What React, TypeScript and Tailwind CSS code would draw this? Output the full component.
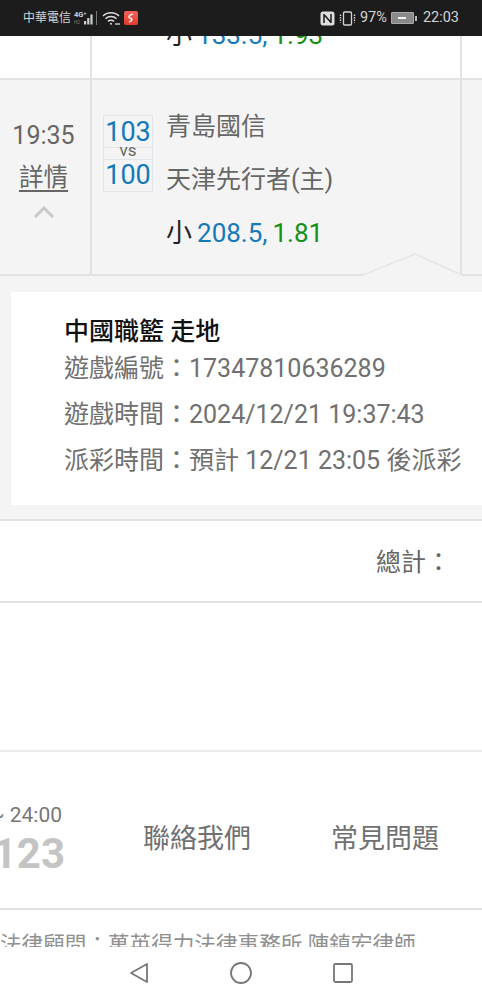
const font = "font-['Roboto','Noto_Sans_CJK_TC',sans-serif]";

function StatusBar() {
  return (
    <div className="h-9 shrink-0 bg-[#1c1c1c] flex items-center pl-[23px] pr-[23px] text-[#d4d4d4] justify-between">
      <div className="flex items-center">
        <span className="text-[12px] leading-none">中華電信</span>
        <svg width="26" height="16" viewBox="0 0 26 16" className="ml-[2px]" fill="#cfcfcf">
          <text x="1" y="7" fontSize="7.5" fontWeight="700">4G⁺</text>
          <text x="1" y="14" fontSize="4.5" fill="#777">HD</text>
          <rect x="11" y="11" width="2.2" height="3.5" />
          <rect x="14.2" y="8" width="2.2" height="6.5" />
          <rect x="17.4" y="4.5" width="2.2" height="10" />
          <rect x="23" y="1" width="1" height="14" fill="#777" />
        </svg>
        <svg width="19" height="15" viewBox="0 0 19 15" className="ml-[3px]" fill="none" stroke="#dcdcdc" strokeWidth="1.5">
          <path d="M1 5 C5 0.5 13 0.5 17 5" />
          <path d="M3.5 7.8 C6.5 4.8 11.5 4.8 14.5 7.8" />
          <path d="M6 10.4 C7.5 9 10.5 9 12 10.4" />
          <circle cx="9" cy="12.8" r="1" fill="#dcdcdc" stroke="none" />
          <rect x="13" y="12" width="5" height="2" fill="#999" stroke="none" />
        </svg>
        <div className="ml-[3px] w-[14px] h-[14px] rounded-[2px] bg-gradient-to-b from-[#f4605a] to-[#e23a2c] flex items-center justify-center">
          <svg width="8" height="10" viewBox="0 0 8 10" fill="none" stroke="#fbe3df" strokeWidth="1.8">
            <path d="M6 1 C2 2 1 4 3 5 C6 6 5 8 2 9" />
          </svg>
        </div>
      </div>
      <div className="flex items-center">
        <svg width="15" height="15" viewBox="0 0 15 15">
          <rect x="0.5" y="0.5" width="14" height="14" rx="2.5" fill="#dedede" />
          <path d="M4 3 V12 M4 3.5 L11 11.5 M11 3 V12" stroke="#1c1c1c" strokeWidth="1.5" fill="none" />
        </svg>
        <svg width="19" height="15" viewBox="0 0 19 15" className="ml-[3px]" fill="none" stroke="#d4d4d4">
          <rect x="5.5" y="1" width="8" height="13" rx="1" strokeWidth="1.3" />
          <path d="M2.5 3.5 V11.5 M16.5 3.5 V11.5" strokeWidth="1.4" strokeDasharray="1.5 1" />
        </svg>
        <span className="ml-[3px] text-[14.5px] leading-none">97%</span>
        <div className="ml-1 flex items-center">
          <div className="w-[23px] h-[12px] bg-[#8a8a8a] border border-[#aaa] rounded-[1px] flex items-center justify-center">
            <div className="w-2 h-[2px] bg-[#f2f2f2]" />
          </div>
          <div className="w-[2px] h-[5px] bg-[#bbb] ml-[1px]" />
        </div>
        <span className="ml-[6px] text-[14.5px] leading-none">22:03</span>
      </div>
    </div>
  );
}

function Odds({ line, price }: { line: string; price: string }) {
  return (
    <div className="text-[26px] leading-none whitespace-nowrap">
      <span className="text-[#222]">小</span>
      <span className="ml-[5px] text-[#1479b8]">{line},</span>
      <span className="ml-[5px] text-[#159018]">{price}</span>
    </div>
  );
}

function MatchRow() {
  return (
    <div className="relative h-[196px] bg-[#f4f4f4] border-b-2 border-[#e2e2e2] flex">
      <div className="w-[92px] shrink-0 border-r-2 border-[#e2e2e2] flex flex-col items-center pt-[43px] pr-[3px]">
        <div className="text-[25px] leading-[26px] text-[#666]">19:35</div>
        <div className="text-[24.5px] leading-[26px] mt-4 text-[#666] underline underline-offset-4">詳情</div>
        <svg width="24" height="14" viewBox="0 0 24 14" className="mt-[14px]" fill="none" stroke="#c9c9c9" strokeWidth="3">
          <path d="M3 12 L12 3 L21 12" />
        </svg>
      </div>
      <div className="w-[370px] shrink-0 border-r-2 border-[#e2e2e2] flex pl-[11px] pt-[35px]">
        <div className="w-[50px] h-[77px] shrink-0 border border-[#dfe5ea] flex flex-col items-center text-[#1479b8]">
          <div className="h-[31px] w-full text-[27px] leading-[32px] text-center">103</div>
          <div className="h-[13px] w-full border-y border-[#dfe5ea] text-[17px] leading-[4px] text-center text-[#666]">vs</div>
          <div className="flex-1 w-full text-[27px] leading-[30px] text-center">100</div>
        </div>
        <div className="ml-[13px] -mt-[3px] flex flex-col">
          <div className="text-[25px] leading-[30px] text-[#666]">青島國信</div>
          <div className="text-[25px] leading-[30px] mt-[23px] text-[#666]">天津先行者(主)</div>
          <div className="mt-[25px]">
            <Odds line="208.5" price="1.81" />
          </div>
        </div>
      </div>
      <svg width="100" height="24" viewBox="0 0 100 24" className="absolute right-[19px] -bottom-[2px]" fill="none">
        <path d="M0 24 V23 L52 2 L99 23 V24 Z" fill="#f4f4f4" />
        <path d="M0 23 L52 2 L99 23" stroke="#e6e6e6" strokeWidth="1.6" />
      </svg>
    </div>
  );
}

function Detail() {
  return (
    <div className="bg-[#f4f4f4] pl-[11px] pt-[16px] pb-[14px] border-b-2 border-[#e2e2e2]">
      <div className="bg-white h-[213px] pl-[53px] pt-[24px]">
        <div className="text-[25px] leading-[32px] font-medium text-[#111]">中國職籃 走地</div>
        <div className="text-[25px] leading-[46px] -mt-[2px] text-[#707070] whitespace-nowrap">遊戲編號：17347810636289</div>
        <div className="text-[25px] leading-[46px] text-[#707070] whitespace-nowrap">遊戲時間：2024/12/21 19:37:43</div>
        <div className="text-[25px] leading-[46px] text-[#707070] whitespace-nowrap">派彩時間：預計 12/21 23:05 後派彩</div>
      </div>
    </div>
  );
}

function Footer() {
  return (
    <div className="h-[158px] border-b-2 border-[#e4e4e4] flex items-center overflow-hidden">
      <div className="w-[65px] shrink-0 flex flex-col items-end mt-[24px] overflow-hidden">
        <div className="text-[21px] leading-6 pr-[3px] text-[#777] whitespace-nowrap">~ 24:00</div>
        <div className="text-[42px] leading-[54px] font-bold text-[#c4c4c4]">123</div>
      </div>
      <div className="ml-[78px] text-[27px] leading-8 text-[#707070] mt-[18px] whitespace-nowrap">聯絡我們</div>
      <div className="ml-[80px] text-[27px] leading-8 text-[#707070] mt-[18px] whitespace-nowrap">常見問題</div>
    </div>
  );
}

export default function App() {
  return (
    <div className={`${font} w-[482px] h-[1000px] overflow-hidden bg-white flex flex-col`}>
      <StatusBar />
      <div className="flex-1 min-h-0 overflow-hidden">
        <div className="h-[44px] border-b-2 border-[#e2e2e2] flex overflow-hidden">
          <div className="w-[92px] shrink-0 border-r-2 border-[#e2e2e2]" />
          <div className="w-[370px] shrink-0 border-r-2 border-[#e2e2e2] pl-[74px] -mt-[14px] h-[58px]">
            <Odds line="133.5" price="1.93" />
          </div>
        </div>
        <MatchRow />
        <Detail />
        <div className="h-[82px] border-b-2 border-[#e2e2e2] flex justify-end items-center pr-[31px] pt-[3px] text-[25px] text-[#666]">
          總計：
        </div>
        <div className="h-[149px] border-b-2 border-[#ececec]" />
        <Footer />
        <div className="h-[38px] overflow-hidden text-[21.6px] leading-[28px] pt-[21px] text-[#909090] whitespace-nowrap">
          法律顧問：萬英得力法律事務所 陳鎮宏律師
        </div>
      </div>
      <div className="h-[53px] shrink-0 bg-white flex items-center justify-center gap-[79px] pb-[2px]">
        <svg width="22" height="24" viewBox="0 0 22 24" fill="none" stroke="#777" strokeWidth="1.8" strokeLinejoin="round">
          <path d="M19 3 L3 12 L19 21 Z" />
        </svg>
        <svg width="24" height="24" viewBox="0 0 24 24" fill="none" stroke="#777" strokeWidth="1.8">
          <circle cx="12" cy="12" r="10" />
        </svg>
        <svg width="22" height="22" viewBox="0 0 22 22" fill="none" stroke="#777" strokeWidth="1.8">
          <rect x="2" y="2" width="18" height="18" rx="1.5" />
        </svg>
      </div>
    </div>
  );
}
